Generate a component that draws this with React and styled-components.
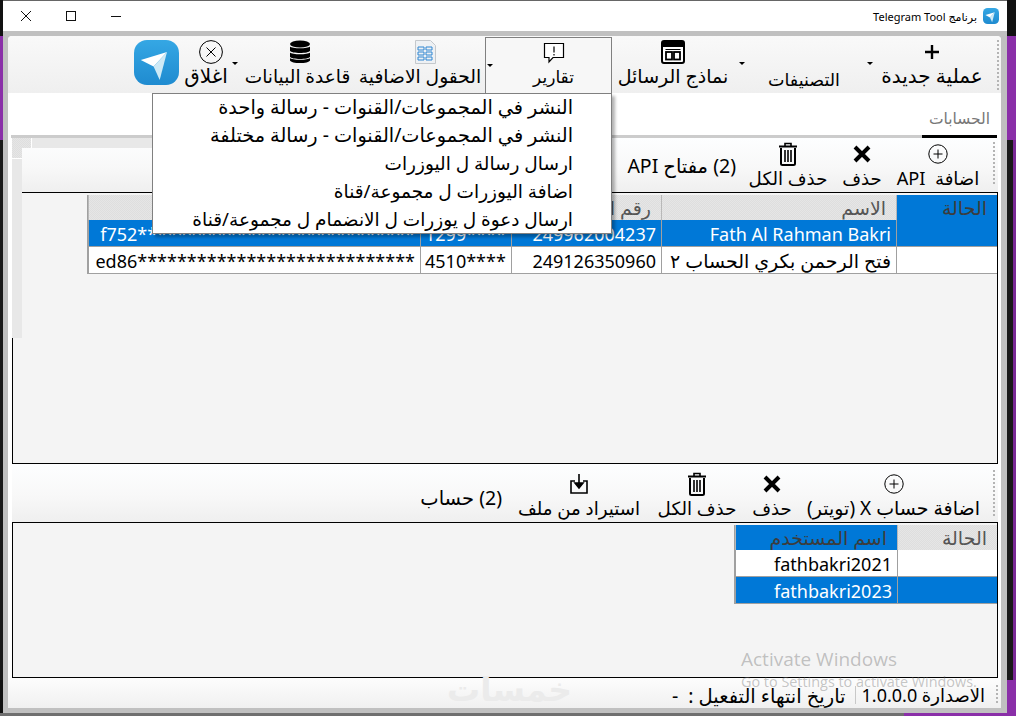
import React from 'react'
import styled, { createGlobalStyle } from 'styled-components'

const UI_FONT = `"Noto Sans", "DejaVu Sans", sans-serif`

const hatch = `
  background-color: #dedede;
  background-image: conic-gradient(#e6e6e6 25%, transparent 0 50%, #e6e6e6 0 75%, transparent 0);
  background-size: 2px 2px;
`

const GlobalStyle = createGlobalStyle`
  html, body {
    margin: 0;
    padding: 0;
    width: 1016px;
    height: 716px;
    overflow: hidden;
  }
  * {
    box-sizing: border-box;
  }
`

const Desktop = styled.div`
  width: 1016px;
  height: 716px;
  padding-left: 3px;
  font-family: ${UI_FONT};
  font-size: 16px;
  color: #000;
  overflow: hidden;
  background:
    linear-gradient(#6f6f6f, #6f6f6f) 0 713px / 904px 3px no-repeat,
    linear-gradient(#8a2fa8, #8a2fa8) 904px 680px / 112px 36px no-repeat,
    linear-gradient(90deg, #191919 0 1013px, #7a2a96 1013px) 0 140px / 1016px 540px no-repeat,
    linear-gradient(#8a2fa8, #8a2fa8) 0 36px / 1016px 104px no-repeat,
    #111;
`

const Window = styled.div`
  position: relative;
  width: 1004px;
  height: 713px;
  display: flex;
  flex-direction: column;
  background: #c0c0c0;
`

const TitleBar = styled.div`
  height: 31px;
  flex: none;
  background: #fff;
  border-top: 1px solid #666;
  display: flex;
  align-items: center;
  justify-content: space-between;
`

const WindowControls = styled.div`
  display: flex;
  align-items: center;
  gap: 29px;
  padding-left: 15px;
`

const WindowControl = styled.svg`
  width: 16px;
  height: 16px;
  display: block;
  fill: none;
  stroke: #111;
  stroke-width: 1;
`

const TitleInfo = styled.div`
  direction: rtl;
  display: flex;
  align-items: center;
  gap: 6px;
  padding-right: 8px;
  font-size: 11px;
`

const Content = styled.div`
  flex: 1;
  margin: 5px 6px 5px 5px;
  border-radius: 4px 4px 0 0;
  background: #fff;
  display: flex;
  flex-direction: column;
  min-height: 0;
`

const MainToolbar = styled.div`
  position: relative;
  height: 57px;
  flex: none;
  direction: rtl;
  display: flex;
  align-items: flex-start;
  padding: 0 11px 0 0;
  border-radius: 4px 4px 0 0;
  background: linear-gradient(#f9f9f9, #efefef);
`

const Gripper = styled.div`
  position: absolute;
  right: ${p => p.$right}px;
  top: ${p => p.$top}px;
  bottom: ${p => p.$bottom}px;
  width: 2px;
  background: repeating-linear-gradient(#b4b4b4 0 2px, transparent 2px 4px);
`

const ToolButton = styled.div`
  position: relative;
  flex: none;
  width: ${p => p.$w}px;
  margin-right: ${p => p.$gap || 0}px;
  padding-top: 4px;
  display: flex;
  flex-direction: column;
  align-items: center;
  white-space: nowrap;
  ${p => p.$pressed && `
    height: 57px;
    margin-top: 1px;
    padding: 3px 0 0 10px;
    border: 1px solid #808080;
    border-bottom: 0;
    background: #f7f7f7;
  `}
`

const IconBox = styled.div`
  height: 24px;
  margin-left: ${p => p.$nudge || 0}px;
  display: flex;
  align-items: center;
  justify-content: center;
`

const ToolLabel = styled.div`
  height: 24px;
  line-height: 24px;
  font-size: ${p => p.$size || 18.2}px;
  transform: translateY(${p => p.$shift || 0}px);
`

const Caret = styled.span`
  position: absolute;
  left: ${p => p.$left || 0}px;
  top: 26px;
  width: 0;
  height: 0;
  border-left: 3px solid transparent;
  border-right: 3px solid transparent;
  border-top: 3px solid #000;
`

const Logo = styled.svg`
  display: block;
  flex: none;
  width: ${p => p.$size}px;
  height: ${p => p.$size}px;
  margin: ${p => p.$margin || 0};
`

const Menu = styled.div`
  position: absolute;
  z-index: 5;
  top: 55px;
  right: -1px;
  width: 460px;
  height: 141px;
  background: #fff;
  border: 1px solid #808080;
  box-shadow: 3px 3px 3px rgba(0, 0, 0, 0.3);
`

const MenuItem = styled.div`
  height: 28px;
  line-height: 26px;
  padding-right: 38px;
  font-size: ${p => p.$wide ? 19.3 : 18.5}px;
  white-space: nowrap;
  text-align: right;
`

const TabStrip = styled.div`
  height: 45px;
  flex: none;
  margin: 0 4px 0 3px;
  direction: rtl;
  display: flex;
  border-bottom: 3px solid #ccc;
`

const Tab = styled.div`
  width: 75px;
  height: 45px;
  padding-top: 13px;
  text-align: center;
  font-size: 15.5px;
  line-height: 24px;
  color: #777;
  border-bottom: 3px solid #000;
`

const Section = styled.div`
  position: relative;
  flex: ${p => p.$grow ? 1 : 'none'};
  padding: 0 3px 0 4px;
  display: flex;
  flex-direction: column;
  min-height: 0;
`

const SectionToolbar = styled.div`
  position: relative;
  height: ${p => p.$h}px;
  flex: none;
  direction: rtl;
  display: flex;
  align-items: flex-start;
  padding: ${p => p.$pt}px 14px 0 0;
  background: linear-gradient(#fdfeff, #f8f8f8 55%, #efefef);
`

const CountLabel = styled.div`
  align-self: center;
  font-size: 19.5px;
  white-space: nowrap;
  margin: ${p => p.$top || 0}px ${p => p.$gap}px 0 0;
`

const Panel = styled.div`
  flex: ${p => p.$h ? 'none' : 1};
  height: ${p => p.$h ? `${p.$h}px` : 'auto'};
  direction: rtl;
  padding-top: 2px;
  background: #f4f4f4;
  border: 1px solid #000;
  overflow: hidden;
`

const Grid = styled.table`
  table-layout: fixed;
  width: ${p => p.$w}px;
  border-collapse: separate;
  border-spacing: 0;
  border-left: 1px solid #a0a0a0;
`

const HeadCell = styled.th`
  height: 25px;
  padding: 0 10px;
  font-size: 19px;
  line-height: 20px;
  font-weight: normal;
  text-align: right;
  color: #555;
  white-space: nowrap;
  overflow: hidden;
  border-left: 1px solid #b8b8b8;
  ${p => p.$active ? 'background: #0078d7; color: #3c3c3c;' : hatch}
`

const Cell = styled.td`
  height: 27px;
  padding: 2px 5px 0;
  font-size: ${p => p.$size || 18}px;
  line-height: 20px;
  text-align: right;
  direction: ${p => p.$ltr ? 'ltr' : 'rtl'};
  white-space: nowrap;
  overflow: hidden;
  color: ${p => p.$selected ? '#fff' : '#000'};
  background: ${p => p.$selected ? '#0078d7' : '#fff'};
  border-left: 1px solid #a0a0a0;
  border-bottom: 1px solid #a0a0a0;
`

const GlitchTop = styled.div`
  position: absolute;
  left: 4px;
  top: 0;
  width: 500px;
  height: 10px;
  background: #e8e8e8;
`

const GlitchSide = styled.div`
  position: absolute;
  left: 4px;
  top: 20px;
  width: 10px;
  height: 180px;
  border-top: 1px solid #fff;
  background: #e8e8e8;
`

const GlitchCorner = styled.div`
  position: absolute;
  left: 4px;
  top: 0;
  width: 20px;
  height: 10px;
  border-right: 1px solid #fff;
  ${hatch}
`

const GlitchCornerLow = styled.div`
  position: absolute;
  left: 4px;
  top: 10px;
  width: 10px;
  height: 10px;
  ${hatch}
`

const StatusBar = styled.div`
  position: relative;
  height: 30px;
  flex: none;
  direction: rtl;
  display: flex;
  align-items: center;
  padding: 4px 16px 0 0;
  font-size: 18px;
  white-space: nowrap;
  background: linear-gradient(#fdfdfd, #f0f0f0);
`

const ExpiryText = styled.span`
  font-size: 19.5px;
  margin-right: 3px;
`

const StatusSeparator = styled.span`
  width: 1px;
  height: 18px;
  margin: 0 6px;
  background: #c8c8c8;
`

const Watermark = styled.div`
  position: absolute;
  left: 444px;
  top: 664px;
  direction: rtl;
  font-size: 33px;
  line-height: 50px;
  font-weight: bold;
  color: #ebebeb;
  pointer-events: none;
`

const Activation = styled.div`
  position: absolute;
  left: 738px;
  top: 646px;
  color: rgba(110, 110, 110, 0.4);
  font-family: "Open Sans", sans-serif;
  white-space: nowrap;
  pointer-events: none;
`

const ActivationTitle = styled.div`
  font-size: 19px;
  line-height: 26px;
`

const ActivationHint = styled.div`
  font-size: 14.4px;
  line-height: 18px;
  margin-top: 1px;
`

const TelegramLogo = ({ size, margin }) => (
  <Logo $size={size} $margin={margin} viewBox="0 0 45 45">
    <defs>
      <linearGradient id="tg" x1="0" y1="0" x2="0" y2="1">
        <stop offset="0" stopColor="#35a7e4" />
        <stop offset="1" stopColor="#1f8bd0" />
      </linearGradient>
    </defs>
    <rect x="0" y="0" width="45" height="45" rx="13" fill="url(#tg)" />
    <polygon points="6.8,20 33,12 19.6,26.4" fill="#fff" />
    <polygon points="33,12 25.7,40 19.6,26.4" fill="#cfeaf6" />
  </Logo>
)

const PlusIcon = () => (
  <svg width="14" height="14" viewBox="0 0 14 14">
    <path d="M7 0v14M0 7h14" stroke="#000" strokeWidth="2.4" />
  </svg>
)

const TemplatesIcon = () => (
  <svg width="24" height="24" viewBox="0 0 24 24" fill="none">
    <rect x="1" y="1" width="22" height="22" rx="2" fill="#fff" stroke="#000" strokeWidth="2" />
    <rect x="1" y="1" width="22" height="6" fill="#000" />
    <path d="M4.5 9.5h15" stroke="#000" strokeWidth="1" />
    <rect x="5" y="12" width="6" height="7.5" stroke="#000" strokeWidth="1.8" />
    <rect x="13" y="12" width="6" height="7.5" stroke="#000" strokeWidth="1.8" />
  </svg>
)

const ReportIcon = () => (
  <svg width="22" height="22" viewBox="0 0 22 22" fill="none">
    <path d="M1.5 1.5h19v14H10l-4 4.5v-4.5H1.5z" fill="#fff" stroke="#000" strokeWidth="1.2" />
    <path d="M11 4.5v6M11 12v1.6" stroke="#000" strokeWidth="1.2" />
  </svg>
)

const FieldsIcon = () => (
  <svg width="21" height="24" viewBox="0 0 21 24" fill="none">
    <path d="M.5.5h15l5 5v18H.5z" fill="#eef1f4" stroke="#c4c8cc" />
    <path d="M3 7h6v3H3zM11 7h6v3h-6zM3 12h6v3H3zM11 12h6v3h-6zM3 17h6v3H3zM11 17h6v3h-6z" stroke="#2f86d2" strokeWidth="1" />
  </svg>
)

const DatabaseIcon = () => (
  <svg width="22" height="24" viewBox="0 0 22 24">
    <ellipse cx="11" cy="4" rx="10" ry="3.6" fill="#000" />
    <path d="M1 6.5c2 2.4 18 2.4 20 0v4.2c-1 3-19 3-20 0z" fill="#000" />
    <path d="M1 12.5c2 2.4 18 2.4 20 0v4.2c-1 3-19 3-20 0z" fill="#000" />
    <path d="M1 18c2 2.4 18 2.4 20 0v2.4c-1 3.4-19 3.4-20 0z" fill="#000" />
  </svg>
)

const CircleXIcon = () => (
  <svg width="24" height="24" viewBox="0 0 24 24" fill="none" stroke="#000" strokeWidth="1">
    <circle cx="12" cy="12" r="11.4" />
    <path d="M7.5 7.5l9 9M16.5 7.5l-9 9" />
  </svg>
)

const CirclePlusIcon = () => (
  <svg width="20" height="20" viewBox="0 0 20 20" fill="none" stroke="#000" strokeWidth="1">
    <circle cx="10" cy="10" r="9.2" />
    <path d="M10 5.5v9M5.5 10h9" />
  </svg>
)

const CrossIcon = () => (
  <svg width="18" height="18" viewBox="0 0 18 18">
    <path d="M2 2l14 14M16 2L2 16" stroke="#000" strokeWidth="4" />
  </svg>
)

const TrashIcon = () => (
  <svg width="20" height="24" viewBox="0 0 20 24" fill="none" stroke="#000">
    <path d="M1 4.5h18" strokeWidth="2" />
    <path d="M7 4V1.5h6V4" strokeWidth="1.6" />
    <path d="M3 6v15.5c0 1 .6 1.5 1.5 1.5h11c.9 0 1.5-.5 1.5-1.5V6" strokeWidth="2" />
    <path d="M7 8v12M10 8v12M13 8v12" strokeWidth="1.6" />
  </svg>
)

const ImportIcon = () => (
  <svg width="20" height="22" viewBox="0 0 20 22" fill="none" stroke="#000" strokeWidth="1.6">
    <path d="M6 8H2v12h16V8h-4" />
    <path d="M10 1v12" />
    <path d="M6 10l4 5 4-5z" fill="#000" />
  </svg>
)

const reportItems = [
  { label: 'النشر في المجموعات/القنوات - رسالة واحدة', wide: true },
  { label: 'النشر في المجموعات/القنوات - رسالة مختلفة', wide: true },
  { label: 'ارسال رسالة ل اليوزرات' },
  { label: 'اضافة اليوزرات ل مجموعة/قناة' },
  { label: 'ارسال دعوة ل يوزرات ل الانضمام ل مجموعة/قناة' }
]

const apiColumns = [101, 235, 150, 91, 332]
const apiHeaders = ['الحالة', 'الاسم', 'رقم الهاتف', 'API ID', 'API HASH']
const apiRows = [
  { id: 1, name: 'Fath Al Rahman Bakri', phone: '249962004237', apiId: '1299****', hash: `f752${'*'.repeat(28)}`, selected: true },
  { id: 2, name: 'فتح الرحمن بكري الحساب ٢', nameSize: 19, phone: '249126350960', apiId: '4510****', hash: `ed86${'*'.repeat(28)}` }
]

const twitterRows = [
  { id: 1, user: 'fathbakri2021' },
  { id: 2, user: 'fathbakri2023', selected: true }
]

const Action = ({ w, gap, icon, nudge, label, size, children }) => (
  <ToolButton $w={w} $gap={gap}>
    <IconBox $nudge={nudge}>{icon}</IconBox>
    <ToolLabel $size={size}>{label}</ToolLabel>
    {children}
  </ToolButton>
)

export default function App() {
  return (
    <Desktop>
      <GlobalStyle />
      <Window>
        <TitleBar>
          <WindowControls>
            <WindowControl viewBox="0 0 16 16"><path d="M3 3l10 10M13 3L3 13" /></WindowControl>
            <WindowControl viewBox="0 0 16 16"><rect x="3.5" y="3.5" width="9" height="9" /></WindowControl>
            <WindowControl viewBox="0 0 16 16"><path d="M3 8.5h10" /></WindowControl>
          </WindowControls>
          <TitleInfo>
            <TelegramLogo size={16} />
            <span>برنامج Telegram Tool</span>
          </TitleInfo>
        </TitleBar>

        <Content>
          <MainToolbar>
            <Action w={116} icon={<PlusIcon />} label="عملية جديدة" size={20}>
              <Caret $left={-7} />
            </Action>
            <ToolButton $w={140}>
              <IconBox />
              <ToolLabel $size={17.5} $shift={3}>التصنيفات</ToolLabel>
              <Caret $left={5} />
            </ToolButton>
            <Action w={122} icon={<TemplatesIcon />} label="نماذج الرسائل" size={19} />
            <ToolButton $w={127} $pressed>
              <IconBox><ReportIcon /></IconBox>
              <ToolLabel $size={17}>تقارير</ToolLabel>
              <Caret $left={1} />
              <Menu>
                {reportItems.map(item => <MenuItem key={item.label} $wide={item.wide}>{item.label}</MenuItem>)}
              </Menu>
            </ToolButton>
            <Action w={130} icon={<FieldsIcon />} nudge={10} label="الحقول الاضافية" size={18.7} />
            <Action w={115} icon={<DatabaseIcon />} nudge={5} label="قاعدة البيانات" size={18.5}>
              <Caret $left={-8} />
            </Action>
            <Action w={52} gap={8} icon={<CircleXIcon />} nudge={10} label="اغلاق" size={20} />
            <TelegramLogo size={45} margin="4px 1px 0 0" />
            <Gripper $right={2} $top={4} $bottom={3} />
          </MainToolbar>

          <TabStrip>
            <Tab>الحسابات</Tab>
          </TabStrip>

          <Section $grow>
            <SectionToolbar $h={54} $pt={0}>
              <Action w={92} icon={<CirclePlusIcon />} label={'اضافة\u00a0\u00a0API'} />
              <Action w={60} icon={<CrossIcon />} label="حذف" />
              <Action w={88} icon={<TrashIcon />} label="حذف الكل" />
              <CountLabel $gap={8}>(2) مفتاح API</CountLabel>
              <Gripper $right={3} $top={4} $bottom={6} />
            </SectionToolbar>
            <Panel>
              <Grid $w={909}>
                <colgroup>
                  {apiColumns.map((w, i) => <col key={i} style={{ width: w }} />)}
                </colgroup>
                <thead>
                  <tr>
                    {apiHeaders.map((h, i) => <HeadCell key={h} $active={i === 0}>{h}</HeadCell>)}
                  </tr>
                </thead>
                <tbody>
                  {apiRows.map(row => (
                    <tr key={row.id}>
                      <Cell $selected={row.selected} />
                      <Cell $selected={row.selected} $size={row.nameSize}>{row.name}</Cell>
                      <Cell $selected={row.selected}>{row.phone}</Cell>
                      <Cell $selected={row.selected} $ltr>{row.apiId}</Cell>
                      <Cell $selected={row.selected} $ltr>{row.hash}</Cell>
                    </tr>
                  ))}
                </tbody>
              </Grid>
            </Panel>
            <GlitchTop />
            <GlitchSide />
            <GlitchCornerLow />
            <GlitchCorner />
          </Section>

          <Section>
            <SectionToolbar $h={58} $pt={4}>
              <Action w={181} icon={<CirclePlusIcon />} label="اضافة حساب X (تويتر)" size={19} />
              <Action w={62} icon={<CrossIcon />} label="حذف" />
              <Action w={88} icon={<TrashIcon />} label="حذف الكل" />
              <Action w={148} icon={<ImportIcon />} label="استيراد من ملف" />
              <CountLabel $gap={3} $top={4}>(2) حساب</CountLabel>
              <Gripper $right={3} $top={6} $bottom={6} />
            </SectionToolbar>
            <Panel $h={156}>
              <Grid $w={262}>
                <colgroup>
                  <col style={{ width: 100 }} />
                  <col style={{ width: 162 }} />
                </colgroup>
                <thead>
                  <tr>
                    <HeadCell>الحالة</HeadCell>
                    <HeadCell $active>اسم المستخدم</HeadCell>
                  </tr>
                </thead>
                <tbody>
                  {twitterRows.map(row => (
                    <tr key={row.id}>
                      <Cell $selected={row.selected} />
                      <Cell $selected={row.selected}>{row.user}</Cell>
                    </tr>
                  ))}
                </tbody>
              </Grid>
            </Panel>
          </Section>

          <StatusBar>
            <span>الاصدارة 1.0.0.0</span>
            <StatusSeparator />
            <ExpiryText>تاريخ انتهاء التفعيل :&nbsp;&nbsp;-</ExpiryText>
            <Gripper $right={3} $top={7} $bottom={3} />
          </StatusBar>
        </Content>

        <Watermark>خمسات</Watermark>
        <Activation>
          <ActivationTitle>Activate Windows</ActivationTitle>
          <ActivationHint>Go to Settings to activate Windows.</ActivationHint>
        </Activation>
      </Window>
    </Desktop>
  )
}
